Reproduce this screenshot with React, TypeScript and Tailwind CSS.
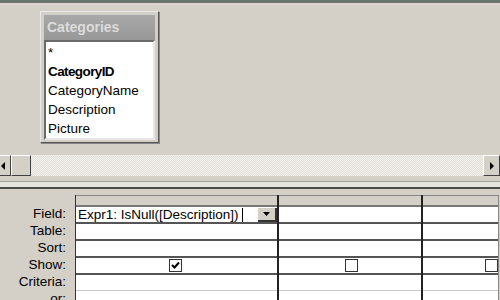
import React from 'react';

const rows = ['Field:', 'Table:', 'Sort:', 'Show:', 'Criteria:', 'or:'];

function CheckBox({ checked }: { checked?: boolean }) {
  return (
    <div className="w-[13px] h-[13px] bg-white border border-[#333] flex items-center justify-center">
      {checked && (
        <svg width="9" height="9" viewBox="0 0 9 9">
          <path d="M1 4 L3.5 6.5 L8 1.5" stroke="#000" strokeWidth="2" fill="none" />
        </svg>
      )}
    </div>
  );
}

function ArrowButton({ dir }: { dir: 'left' | 'right' }) {
  return (
    <div className="w-[17px] h-full bg-[#d4d0c8] border-t border-l border-t-white border-l-white border-b border-r border-b-[#404040] border-r-[#404040] flex items-center justify-center">
      <svg width="6" height="8" viewBox="0 0 6 8">
        {dir === 'right' ? <path d="M1 0 L5 4 L1 8 Z" fill="#000" /> : <path d="M5 0 L1 4 L5 8 Z" fill="#000" />}
      </svg>
    </div>
  );
}

export default function App() {
  return (
    <div className="w-[500px] h-[300px] overflow-hidden bg-[#d4d0c8] flex flex-col font-['Liberation_Sans',Arial,sans-serif] text-black">
      {/* top edge */}
      <div className="h-[3px] bg-[#6b736f] shrink-0" />
      <div className="h-[2px] bg-[#ddd3cf] shrink-0" />

      {/* upper pane with table list */}
      <div className="relative h-[150px] shrink-0">
        <div className="absolute left-[40px] top-[6px] w-[119px] h-[132px] bg-[#d4d0c8] border border-[#e8e8e8] border-r-[#555] border-b-[#555] shadow-[1px_1px_0_#888] p-[3px] flex flex-col">
          <div className="h-[25px] bg-gradient-to-b from-[#a8a8a8] to-[#989898] text-[#dcdcdc] font-bold text-[14px] leading-[25px] px-[3px]">
            Categories
          </div>
          <div className="flex-1 bg-white border-2 border-t-[#6a6a6a] border-l-[#6a6a6a] border-r-[#e8e8e8] border-b-[#e8e8e8] px-[2px] text-[13.5px] leading-[19px]">
            <div className="pt-[1px]">*</div>
            <div className="font-bold tracking-[-0.6px]">CategoryID</div>
            <div>CategoryName</div>
            <div>Description</div>
            <div>Picture</div>
          </div>
        </div>
      </div>

      {/* horizontal scroll bar */}
      <div className="h-[21px] shrink-0 flex bg-[repeating-conic-gradient(#f2f0ec_0_25%,#e2dfd8_0_50%)] bg-[length:2px_2px]">
        <div className="ml-[-6px]"><ArrowButton dir="left" /></div>
        <div className="w-[20px] h-full bg-[#d4d0c8] border-t border-l border-t-white border-l-white border-b border-r border-b-[#404040] border-r-[#404040]" />
        <div className="flex-1" />
        <ArrowButton dir="right" />
      </div>

      {/* splitter */}
      <div className="h-[5px] shrink-0" />
      <div className="h-px bg-[#a0a0a0] shrink-0" />
      <div className="h-[5px] bg-[#e6e3dd] shrink-0" />
      <div className="h-[2px] bg-[#4a4a4a] shrink-0" />
      <div className="h-[6px] shrink-0" />

      {/* design grid */}
      <div className="flex text-[13.5px]">
        <div className="w-[75px] shrink-0 pt-[10px]">
          {rows.map((r) => (
            <div key={r} className="h-[17px] leading-[17px] text-right pr-[9px]">
              {r}
            </div>
          ))}
        </div>
        <div className="flex border-l border-[#333]">
          {/* column 1 */}
          <div className="w-[203px] border-r-2 border-[#222]">
            <div className="h-[10px] bg-[#d4d0c8] border-t border-[#888]" />
            <div className="h-[17px] bg-white border-t-2 border-[#777] flex items-center relative">
              <span className="pl-[2px] leading-[15px] whitespace-nowrap">Expr1: IsNull([Description])</span>
              <span className="w-px h-[14px] bg-black ml-[3px]" />
              <div className="absolute right-0 top-[1px] w-[19px] h-[14px] bg-[#d4d0c8] border-b-2 border-r-2 border-[#333] flex items-center justify-center">
                <svg width="7" height="4" viewBox="0 0 7 4"><path d="M0 0 L7 0 L3.5 4 Z" fill="#000" /></svg>
              </div>
            </div>
            <div className="h-[17px] bg-white border-t-2 border-[#555]" />
            <div className="h-[17px] bg-white border-t-2 border-[#555]" />
            <div className="h-[17px] bg-white border-t-2 border-[#555] flex items-center justify-center pr-[2px]">
              <CheckBox checked />
            </div>
            <div className="h-[17px] bg-white border-t-2 border-[#555]" />
            <div className="h-[17px] bg-white border-t border-[#c8c8c8]" />
          </div>
          {/* column 2 */}
          <div className="w-[144px] border-r-2 border-[#222]">
            <div className="h-[10px] bg-[#d4d0c8] border-t border-[#888]" />
            <div className="h-[17px] bg-white border-t-2 border-[#777]" />
            <div className="h-[17px] bg-white border-t-2 border-[#555]" />
            <div className="h-[17px] bg-white border-t-2 border-[#555]" />
            <div className="h-[17px] bg-white border-t-2 border-[#555] flex items-center justify-center pl-[2px]">
              <CheckBox />
            </div>
            <div className="h-[17px] bg-white border-t-2 border-[#555]" />
            <div className="h-[17px] bg-white border-t border-[#c8c8c8]" />
          </div>
          {/* column 3 */}
          <div className="w-[76px] border-r border-[#888]">
            <div className="h-[10px] bg-[#d4d0c8] border-t border-[#888]" />
            <div className="h-[17px] bg-white border-t-2 border-[#777]" />
            <div className="h-[17px] bg-white border-t-2 border-[#555]" />
            <div className="h-[17px] bg-white border-t-2 border-[#555]" />
            <div className="h-[17px] bg-white border-t-2 border-[#555] flex items-center justify-end">
              <CheckBox />
            </div>
            <div className="h-[17px] bg-white border-t-2 border-[#555]" />
            <div className="h-[17px] bg-white border-t border-[#c8c8c8]" />
          </div>
        </div>
      </div>
    </div>
  );
}
